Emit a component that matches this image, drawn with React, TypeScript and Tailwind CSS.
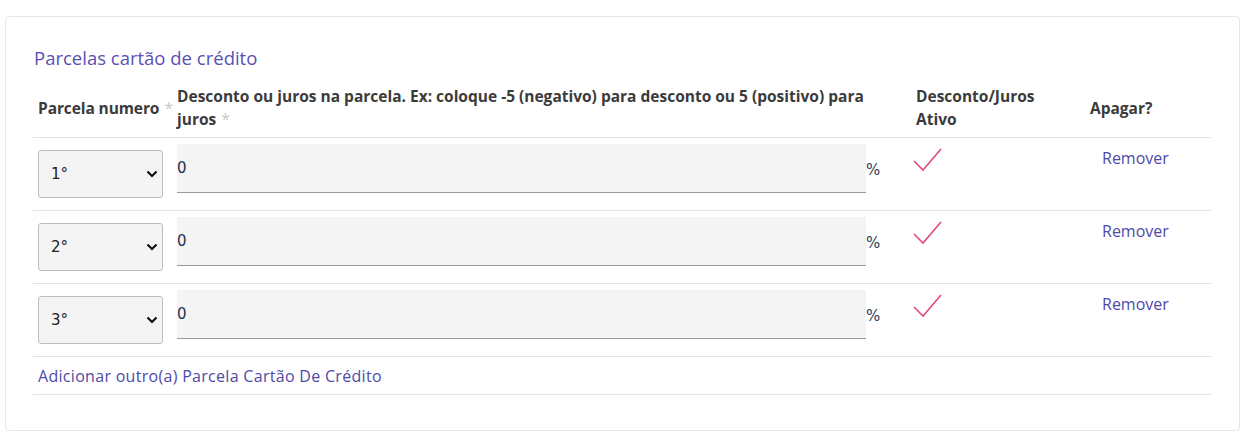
import { useState } from "react";

interface Parcela {
  id: number;
  numero: string;
  valor: string;
  ativo: boolean;
}

const FONT = "font-['Open_Sans','Lato',sans-serif]";

function Check() {
  return (
    <svg width="30" height="24" viewBox="0 0 30 24" fill="none">
      <path d="M1 13 L10 22 L28 1" stroke="#e2497f" strokeWidth="1.6" />
    </svg>
  );
}

export default function App() {
  const [parcelas] = useState<Parcela[]>([
    { id: 1, numero: "1°", valor: "0", ativo: true },
    { id: 2, numero: "2°", valor: "0", ativo: true },
    { id: 3, numero: "3°", valor: "0", ativo: true },
  ]);

  return (
    <div className={`bg-white pt-4 pl-[5px] pr-[10px] ${FONT}`}>
      <div className="border border-[#e6e6e6] rounded-[4px] pl-[27px] pr-[28px] pt-[29px] pb-[35px]">
        <h2 className="text-[18.5px] leading-6 text-[#5a50b3] pl-px">Parcelas cartão de crédito</h2>

        <table className="mt-[11px] w-full table-fixed border-collapse text-[#3b3b3b]">
          <colgroup>
            <col className="w-[139px]" />
            <col className="w-[739px]" />
            <col className="w-[174px]" />
            <col />
          </colgroup>
          <thead>
            <tr className="border-b border-[#e2e2e2]">
              <th className="pl-[5px] text-left text-[15.5px] font-bold leading-[23px] align-middle pt-1 pb-[6px] whitespace-nowrap tracking-[-0.1px]">
                Parcela numero<span className="ml-[5px] text-[#c8c8c8] font-normal">*</span>
              </th>
              <th className="pl-[5px] pr-8 text-left text-[15.5px] font-bold leading-[23px] align-middle pt-1 pb-[6px]">
                Desconto ou juros na parcela. Ex: coloque -5 (negativo) para desconto ou 5 (positivo) para juros
                <span className="ml-[5px] text-[#c8c8c8] font-normal">*</span>
              </th>
              <th className="pl-[5px] text-left text-[15.5px] font-bold leading-[23px] align-middle pt-1 pb-[6px]">
                Desconto/Juros
                <br />
                Ativo
              </th>
              <th className="pl-[5px] text-left text-[15.5px] font-bold leading-[23px] align-middle pt-1 pb-[6px]">Apagar?</th>
            </tr>
          </thead>
          <tbody>
            {parcelas.map((p) => (
              <tr key={p.id} className="border-b border-[#e2e2e2]">
                <td className="pl-[5px] pt-[12px] pb-[12px] align-top">
                  <div className="relative w-[125px]">
                    <select
                      defaultValue={p.numero}
                      className="appearance-none block w-[125px] h-[48px] bg-[#f4f4f4] border border-[#bdbdbd] rounded-[3px] pl-3 font-['DejaVu_Sans',sans-serif] text-[15px] text-[#222]"
                    >
                      <option>{p.numero}</option>
                    </select>
                    <svg className="absolute right-[5px] top-[19px] pointer-events-none" width="12" height="10" viewBox="0 0 12 10">
                      <path d="M1.5 2.5 L6 7 L10.5 2.5" stroke="#111" strokeWidth="2.2" fill="none" />
                    </svg>
                  </div>
                </td>
                <td className="pl-[5px] pt-[6px] align-top">
                  <div className="flex items-center">
                    <input
                      defaultValue={p.valor}
                      className="w-[689px] h-[49px] bg-[#f4f4f4] border-b border-[#9a9a9a] outline-none px-0 font-['DejaVu_Sans',sans-serif] text-[15px] text-[#1e3355]"
                    />
                    <span className="font-['DejaVu_Sans',sans-serif] text-[15px] text-[#2d3d58] pt-1">%</span>
                  </div>
                </td>
                <td className="pl-[2px] pt-[10px] align-top">{p.ativo && <Check />}</td>
                <td className="pl-[17px] pt-[8px] align-top">
                  <button className="text-[16px] leading-5 text-[#4e4aa8]">Remover</button>
                </td>
              </tr>
            ))}
            <tr className="border-b border-[#e2e2e2]">
              <td colSpan={4} className="pl-[5px] h-[38px] align-middle">
                <button className="text-[16px] tracking-[0.3px] text-[#4e4aa8]">Adicionar outro(a) Parcela Cartão De Crédito</button>
              </td>
            </tr>
          </tbody>
        </table>
      </div>
    </div>
  );
}
